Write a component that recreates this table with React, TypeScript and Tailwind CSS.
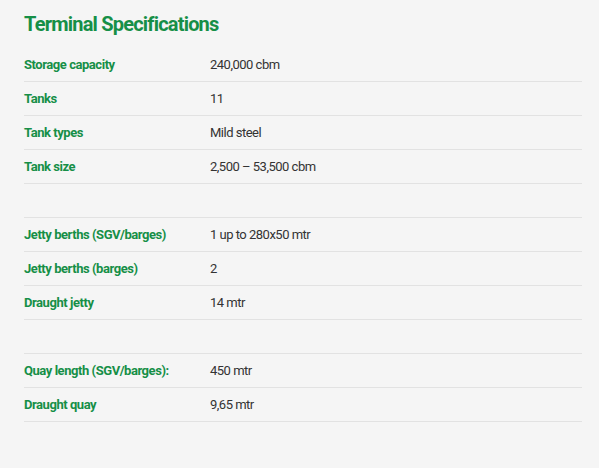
const rows: ([string, string] | null)[] = [
  ["Storage capacity", "240,000 cbm"],
  ["Tanks", "11"],
  ["Tank types", "Mild steel"],
  ["Tank size", "2,500 – 53,500 cbm"],
  null,
  ["Jetty berths (SGV/barges)", "1 up to 280x50 mtr"],
  ["Jetty berths (barges)", "2"],
  ["Draught jetty", "14 mtr"],
  null,
  ["Quay length (SGV/barges):", "450 mtr"],
  ["Draught quay", "9,65 mtr"],
];

export default function App() {
  return (
    <div className="min-h-screen bg-white" style={{ fontFamily: "Roboto, 'Liberation Sans', sans-serif" }}>
      <div className="bg-[#f5f5f5] pl-6 pr-[17px] pt-[10px] pb-[46px]">
        <h2 className="mb-[10px] text-[20px] font-bold leading-7 tracking-[-0.8px] text-[#168f47]">
          Terminal Specifications
        </h2>
        <div>
          {rows.map((row, i) => (
            <div key={i} className="flex h-[34px] items-center border-b border-[#e2e2e2] text-[13px]">
              {row && (
                <>
                  <span className="w-[186px] font-bold tracking-[-0.45px] text-[#168f47]">{row[0]}</span>
                  <span className="tracking-[-0.5px] text-[#333333]">{row[1]}</span>
                </>
              )}
            </div>
          ))}
        </div>
      </div>
    </div>
  );
}
